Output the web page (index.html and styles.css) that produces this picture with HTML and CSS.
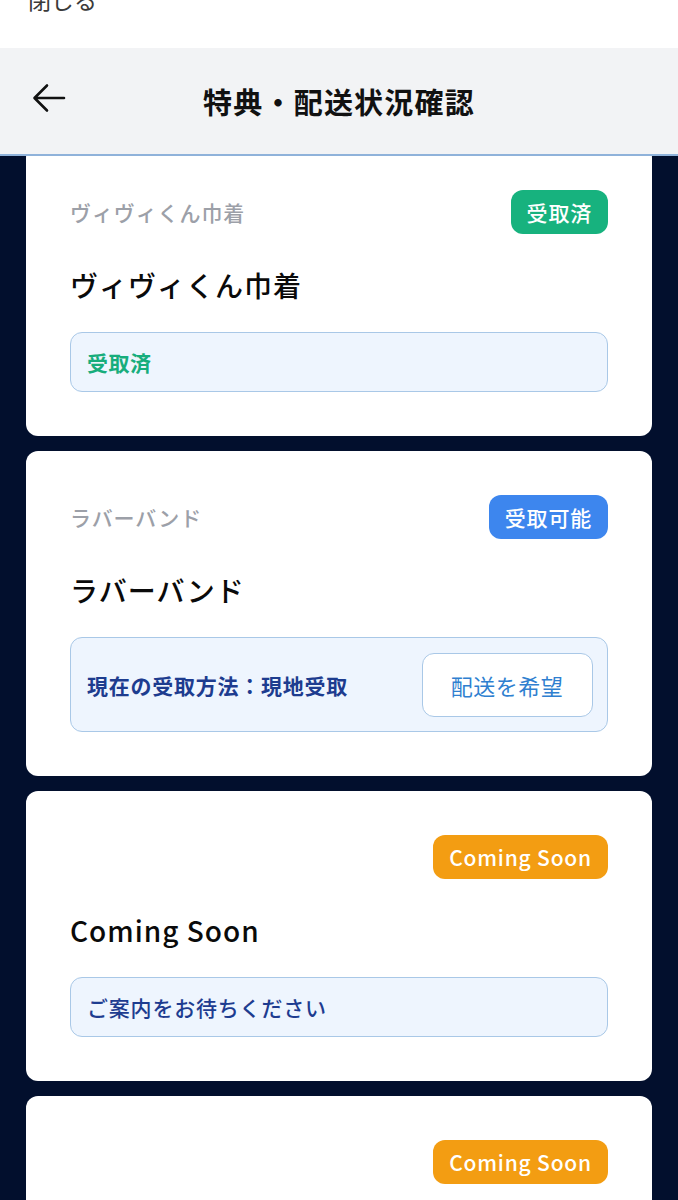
FILE: index.html
```html
<!DOCTYPE html>
<html lang="ja">
<head>
<meta charset="utf-8">
<title>特典・配送状況確認</title>
<link rel="stylesheet" href="styles.css">
</head>
<body>
<div class="close-bar"><span class="close-text">閉じる</span></div>
<header class="header">
  <div class="back">
    <svg width="34" height="30" viewBox="0 0 34 30" aria-hidden="true">
      <path d="M32 15 H3 M15 2.5 L2.5 15 L15 27.5" fill="none" stroke="#111" stroke-width="2.6" stroke-linecap="round" stroke-linejoin="round"/>
    </svg>
  </div>
  <h1 class="title">特典・配送状況確認</h1>
  <div></div>
</header>
<main class="list">
  <section class="card">
    <div class="card-head">
      <span class="sub">ヴィヴィくん巾着</span>
      <span class="badge badge-green">受取済</span>
    </div>
    <h2 class="name">ヴィヴィくん巾着</h2>
    <div class="info"><span class="info-green">受取済</span></div>
  </section>
  <section class="card">
    <div class="card-head">
      <span class="sub">ラバーバンド</span>
      <span class="badge badge-blue">受取可能</span>
    </div>
    <h2 class="name">ラバーバンド</h2>
    <div class="info info-row">
      <span class="info-bold">現在の受取方法：現地受取</span>
      <button class="ship-btn" type="button">配送を希望</button>
    </div>
  </section>
  <section class="card">
    <div class="card-head">
      <span class="sub"></span>
      <span class="badge badge-orange">Coming Soon</span>
    </div>
    <h2 class="name">Coming Soon</h2>
    <div class="info"><span class="info-blue">ご案内をお待ちください</span></div>
  </section>
  <section class="card">
    <div class="card-head">
      <span class="sub"></span>
      <span class="badge badge-orange">Coming Soon</span>
    </div>
    <h2 class="name">Coming Soon</h2>
    <div class="info"><span class="info-blue">ご案内をお待ちください</span></div>
  </section>
</main>
</body>
</html>
```

FILE: styles.css
```css
* { box-sizing: border-box; }
html, body {
  margin: 0;
  padding: 0;
}
body {
  background: #020f2d;
  font-family: "Noto Sans CJK JP", "Noto Sans", sans-serif;
  overflow: hidden;
  height: 1200px;
}
.close-bar {
  height: 48px;
  background: #ffffff;
  overflow: hidden;
  padding-left: 28px;
}
.close-text {
  display: block;
  margin-top: -13px;
  font-size: 23px;
  line-height: 24px;
  color: #3a3a3a;
  font-weight: 400;
}
.header {
  position: relative;
  z-index: 2;
  height: 108px;
  background: #f2f3f5;
  border-bottom: 2px solid #8fb2da;
  display: grid;
  grid-template-columns: 1fr auto 1fr;
  align-items: center;
}
.back {
  padding-left: 32px;
  display: flex;
  align-items: center;
  height: 30px;
  margin-top: -6px;
}
.title {
  margin: 0;
  font-size: 29px;
  font-weight: 700;
  color: #111;
  letter-spacing: 1.2px;
  line-height: 40px;
}
.list {
  position: relative;
  z-index: 1;
  margin-top: -10px;
  padding: 0 26px;
  display: flex;
  flex-direction: column;
  gap: 15px;
}
.card {
  background: #ffffff;
  border-radius: 12px;
  padding: 44px;
}
.card-head {
  display: flex;
  justify-content: space-between;
  align-items: center;
  height: 44px;
}
.sub {
  font-size: 21px;
  font-weight: 500;
  color: #9ca0a8;
  letter-spacing: 0.9px;
}
.badge {
  height: 44px;
  line-height: 44px;
  padding: 0 16px;
  border-radius: 12px;
  color: #ffffff;
  font-size: 21px;
  font-weight: 500;
  letter-spacing: 0.8px;
}
.badge-green { background: #17b27e; }
.badge-blue { background: #3d86ee; }
.badge-orange { background: #f39d12; }
.name {
  margin: 31px 0 27px;
  font-size: 28px;
  line-height: 40px;
  font-weight: 500;
  color: #0a0a0a;
  letter-spacing: 1px;
}
.info {
  background: #eef5fe;
  border: 1.5px solid #a9c8e7;
  border-radius: 12px;
  padding: 16px 16px;
  font-size: 21px;
  line-height: 26px;
}
.info-row {
  display: flex;
  align-items: center;
  justify-content: space-between;
  padding: 14.5px 14.5px 14.5px 16px;
}
.info-green {
  color: #17ad7c;
  font-weight: 700;
  letter-spacing: 0.5px;
}
.info-blue {
  color: #1d3c90;
  font-weight: 500;
  letter-spacing: 0.8px;
}
.info-bold {
  color: #1d3c8f;
  font-weight: 700;
  letter-spacing: 0.75px;
}
.ship-btn {
  height: 64px;
  width: 171px;
  background: #ffffff;
  border: 1.5px solid #a9c8e7;
  border-radius: 12px;
  color: #2f7fd0;
  font-family: "Noto Sans CJK JP", "Noto Sans", sans-serif;
  font-size: 22px;
  font-weight: 400;
  letter-spacing: 0.5px;
  cursor: pointer;
}
```
